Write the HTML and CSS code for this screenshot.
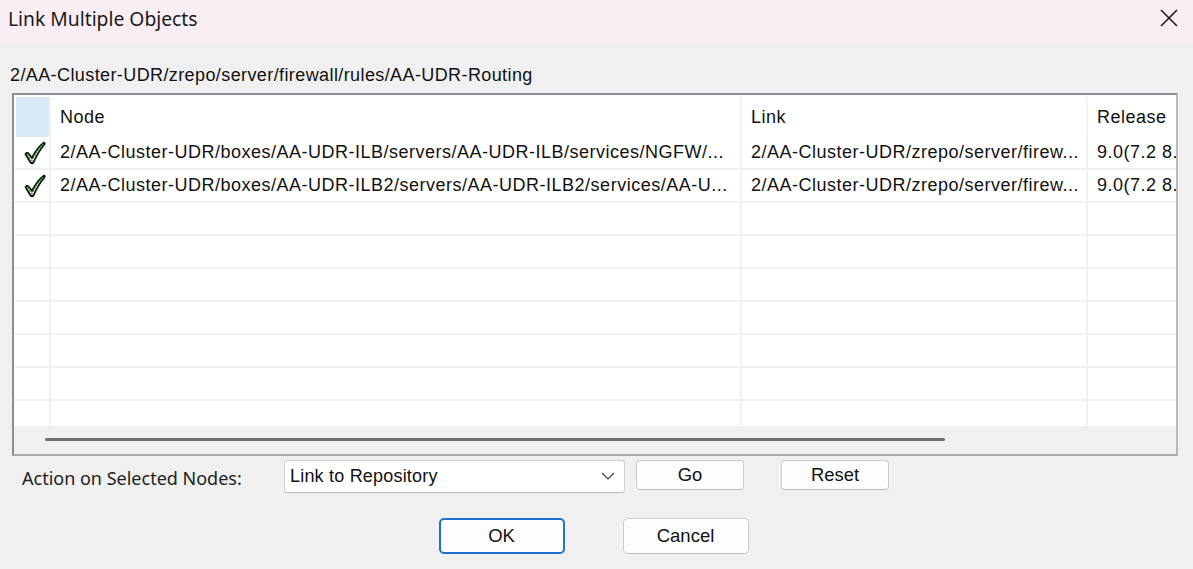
FILE: index.html
```html
<!DOCTYPE html>
<html>
<head>
<meta charset="utf-8">
<link rel="stylesheet" href="styles.css">
</head>
<body>
<div class="dialog">
  <div class="titlebar">
    <span class="title">Link Multiple Objects</span>
    <svg class="close" width="18" height="18" viewBox="0 0 18 18"><path d="M1 1 L17 17 M17 1 L1 17" stroke="#1a1a1a" stroke-width="1.6" fill="none"/></svg>
  </div>
  <div class="content">
    <div class="path">2/AA-Cluster-UDR/zrepo/server/firewall/rules/AA-UDR-Routing</div>
    <div class="grid">
      <div class="rows">
        <div class="row head">
          <div class="cell rh sel"></div>
          <div class="cell">Node</div>
          <div class="cell">Link</div>
          <div class="cell last">Release</div>
        </div>
        <div class="row">
          <div class="cell rh"><svg class="check" width="24" height="26" viewBox="0 0 24 26"><path d="M2.5 14 Q4 12 5.5 13.5 L9 18 Q14 8 21 2.5 Q22.5 3 21 5 Q15 12 10.5 22.5 Q9 24 7.5 22.5 Z" fill="#fff" stroke="#111" stroke-width="1.8" stroke-linejoin="round"/><path d="M4.5 14.5 L9 20.5 Q14 10 20.5 4" stroke="#1f9a2a" stroke-width="1.5" stroke-dasharray="1.8 1.4" fill="none"/></svg></div>
          <div class="cell">2/AA-Cluster-UDR/boxes/AA-UDR-ILB/servers/AA-UDR-ILB/services/NGFW/...</div>
          <div class="cell">2/AA-Cluster-UDR/zrepo/server/firew...</div>
          <div class="cell last">9.0(7.2 8.</div>
        </div>
        <div class="row">
          <div class="cell rh"><svg class="check" width="24" height="26" viewBox="0 0 24 26"><path d="M2.5 14 Q4 12 5.5 13.5 L9 18 Q14 8 21 2.5 Q22.5 3 21 5 Q15 12 10.5 22.5 Q9 24 7.5 22.5 Z" fill="#fff" stroke="#111" stroke-width="1.8" stroke-linejoin="round"/><path d="M4.5 14.5 L9 20.5 Q14 10 20.5 4" stroke="#1f9a2a" stroke-width="1.5" stroke-dasharray="1.8 1.4" fill="none"/></svg></div>
          <div class="cell">2/AA-Cluster-UDR/boxes/AA-UDR-ILB2/servers/AA-UDR-ILB2/services/AA-U...</div>
          <div class="cell">2/AA-Cluster-UDR/zrepo/server/firew...</div>
          <div class="cell last">9.0(7.2 8.</div>
        </div>
        <div class="row"><div class="cell rh"></div><div class="cell"></div><div class="cell"></div><div class="cell last"></div></div>
        <div class="row"><div class="cell rh"></div><div class="cell"></div><div class="cell"></div><div class="cell last"></div></div>
        <div class="row"><div class="cell rh"></div><div class="cell"></div><div class="cell"></div><div class="cell last"></div></div>
        <div class="row"><div class="cell rh"></div><div class="cell"></div><div class="cell"></div><div class="cell last"></div></div>
        <div class="row"><div class="cell rh"></div><div class="cell"></div><div class="cell"></div><div class="cell last"></div></div>
        <div class="row"><div class="cell rh"></div><div class="cell"></div><div class="cell"></div><div class="cell last"></div></div>
        <div class="row"><div class="cell rh"></div><div class="cell"></div><div class="cell"></div><div class="cell last"></div></div>
      </div>
      <div class="hscroll"><div class="thumb"></div></div>
    </div>
    <div class="actions">
      <span class="action-label">Action on Selected Nodes:</span>
      <div class="select">
        <span>Link to Repository</span>
        <svg width="14" height="8" viewBox="0 0 14 8"><path d="M1 1 L7 7 L13 1" stroke="#444" stroke-width="1.2" fill="none"/></svg>
      </div>
      <button class="btn small go">Go</button>
      <button class="btn small reset">Reset</button>
    </div>
    <div class="footer">
      <button class="btn big primary">OK</button>
      <button class="btn big">Cancel</button>
    </div>
  </div>
</div>
</body>
</html>
```

FILE: styles.css
```css
html, body {
  margin: 0;
  padding: 0;
}
body {
  width: 1193px;
  height: 569px;
  overflow: hidden;
  background: #f0f0f0;
  font-family: "Liberation Sans", Arial, sans-serif;
  color: #000;
}
.dialog {
  display: flex;
  flex-direction: column;
  height: 569px;
}
.titlebar {
  height: 43px;
  background: #f9eef3;
  display: flex;
  align-items: center;
  justify-content: space-between;
  padding: 0 15px 0 8px;
  box-sizing: border-box;
}
.title {
  font-family: "Noto Sans", "Open Sans", sans-serif;
  font-size: 19.3px;
  color: #1a1a1a;
  margin-top: -7px;
}
.close {
  margin-top: -7px;
}
.content {
  padding: 0 15px 0 12px;
}
.path {
  font-size: 18px;
  letter-spacing: 0.4px;
  margin: 20px 0 0 -2px;
  height: 30px;
  line-height: 24px;
  color: #111;
}
.grid {
  width: 1166px;
  height: 363px;
  box-sizing: border-box;
  border: 2px solid #8a8d93;
  border-right-color: #b8b8b8;
  border-bottom-color: #a8a8a8;
  background: #fff;
  display: flex;
  flex-direction: column;
  overflow: hidden;
}
.rows {
  height: 331px;
  overflow: hidden;
  background: #fff;
}
.row {
  display: grid;
  grid-template-columns: 37px 691px 346px 1fr;
  height: 33px;
  box-sizing: border-box;
  border-bottom: 2px solid #f0f0f0;
}
.row.head {
  height: 42px;
  border-bottom: none;
}
.cell {
  border-right: 2px solid #f0f0f0;
  font-size: 18px;
  letter-spacing: 0.5px;
  white-space: nowrap;
  overflow: hidden;
  padding-left: 9px;
  display: flex;
  align-items: center;
  color: #111;
}
.cell.last {
  border-right: none;
}
.cell.rh {
  padding-left: 0;
  justify-content: center;
}
.head .cell {
  border-right-color: #f3f3f3;
  margin-top: 2px;
}
.head .cell.sel {
  background: #d9e9f8;
  margin-left: 2px;
}
.check {
  margin-left: 6px;
}
.hscroll {
  flex: 1;
  background: #f0f0f0;
  display: flex;
  align-items: center;
  padding-left: 31px;
}
.thumb {
  width: 900px;
  height: 3px;
  background: #6e6e6e;
  border-radius: 2px;
  margin-top: -2px;
}
.actions {
  display: flex;
  align-items: center;
  margin-top: 3px;
  height: 34px;
}
.action-label {
  font-family: "Noto Sans", "Open Sans", sans-serif;
  font-size: 18px;
  color: #222;
  margin-left: 10px;
  width: 262px;
  margin-top: 4px;
}
.select {
  width: 341px;
  height: 33px;
  box-sizing: border-box;
  background: #fff;
  border: 1px solid #d0d0d0;
  border-bottom-color: #bcbcbc;
  border-radius: 3px;
  display: flex;
  align-items: center;
  justify-content: space-between;
  padding: 0 9px 0 5px;
  font-size: 18px;
  letter-spacing: 0.2px;
  color: #111;
}
.btn {
  font-family: "Liberation Sans", Arial, sans-serif;
  background: #fdfdfd;
  border: 1px solid #cccccc;
  border-bottom-color: #bdbdbd;
  border-radius: 4px;
  color: #111;
  padding: 0;
  box-sizing: border-box;
}
.btn.small {
  width: 108px;
  height: 30px;
  font-size: 18.4px;
  margin-top: -3px;
}
.go {
  margin-left: 11px;
}
.reset {
  margin-left: 37px;
}
.footer {
  display: flex;
  justify-content: center;
  gap: 58px;
  margin-top: 25px;
  padding-right: 3px;
}
.btn.big {
  width: 126px;
  height: 36px;
  font-size: 18.5px;
  border-radius: 5px;
}
.btn.primary {
  border: 2px solid #1a73cf;
}
```
